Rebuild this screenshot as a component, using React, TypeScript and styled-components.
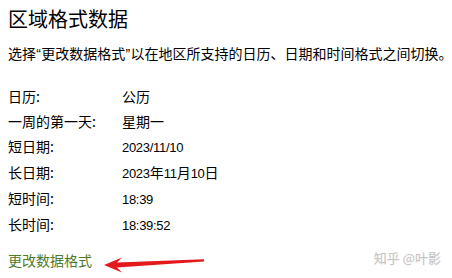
import styled, { createGlobalStyle } from "styled-components";

const GlobalStyle = createGlobalStyle`
  html, body {
    margin: 0;
    padding: 0;
    background: #ffffff;
  }
`;

const rows = [
  { label: "日历:", value: "公历" },
  { label: "一周的第一天:", value: "星期一" },
  { label: "短日期:", value: "2023/11/10" },
  { label: "长日期:", value: "2023年11月10日" },
  { label: "短时间:", value: "18:39" },
  { label: "长时间:", value: "18:39:52" },
];

// digits and separators use a narrower latin face than the CJK font
const renderValue = (value: string) =>
  value
    .split(/([0-9/:]+)/)
    .filter(Boolean)
    .map((part, idx) =>
      /^[0-9/:]+$/.test(part) ? <Num key={idx}>{part}</Num> : part,
    );

const App = () => {
  return (
    <Page>
      <GlobalStyle />
      <Title>区域格式数据</Title>
      <Intro>
        选择<Quote>“</Quote>更改数据格式<Quote>”</Quote>
        以在地区所支持的日历、日期和时间格式之间切换。
      </Intro>
      <Table>
        {rows.map((row) => (
          <Row key={row.label}>
            <Label>{row.label}</Label>
            <Value>{renderValue(row.value)}</Value>
          </Row>
        ))}
      </Table>
      <LinkRow>
        <Link href="#">更改数据格式</Link>
        <Arrow width="102" height="18" viewBox="0 0 102 18">
          <polygon
            points="0,9 18,1.5 13,6.5 100,3.2 100,5.6 13,11.5 18,16.5"
            fill="#e3191b"
          />
        </Arrow>
      </LinkRow>
      <Watermark>知乎 @叶影</Watermark>
    </Page>
  );
};

const Page = styled.div`
  position: relative;
  box-sizing: border-box;
  width: 452px;
  height: 278px;
  overflow: hidden;
  padding: 5px 0 0 8px;
  background: #ffffff;
  color: #000000;
  font-family: "Noto Sans CJK SC", "Noto Sans", sans-serif;
`;

const Title = styled.h1`
  margin: 0;
  font-size: 20px;
  font-weight: 400;
  line-height: 28px;
`;

const Intro = styled.p`
  margin: 10px 0 0;
  font-size: 14px;
  line-height: 20px;
  white-space: nowrap;
`;

const Quote = styled.span`
  font-family: "Liberation Sans", sans-serif;
  padding: 0 0.3px;
`;

const Table = styled.div`
  display: flex;
  flex-direction: column;
  margin-top: 20px;
`;

const Row = styled.div`
  display: grid;
  grid-template-columns: 114px auto;
  font-size: 14px;
  line-height: 25px;
`;

const Label = styled.span``;

const Value = styled.span``;

const Num = styled.span`
  font-family: "Liberation Sans", sans-serif;
  font-size: 13px;
  letter-spacing: -0.3px;
`;

const LinkRow = styled.div`
  display: flex;
  align-items: flex-start;
  margin-top: 12px;
`;

const Link = styled.a`
  font-size: 14px;
  line-height: 20px;
  color: #4e7a2a;
  text-decoration: none;
`;

const Arrow = styled.svg`
  display: block;
  margin: 6px 0 0 12px;
`;

const Watermark = styled.span`
  position: absolute;
  right: 11px;
  top: 249px;
  font-size: 13px;
  line-height: 18px;
  color: #c4c4c4;
  text-shadow: 0 1px 1px rgba(0, 0, 0, 0.06);
`;

export default App;
